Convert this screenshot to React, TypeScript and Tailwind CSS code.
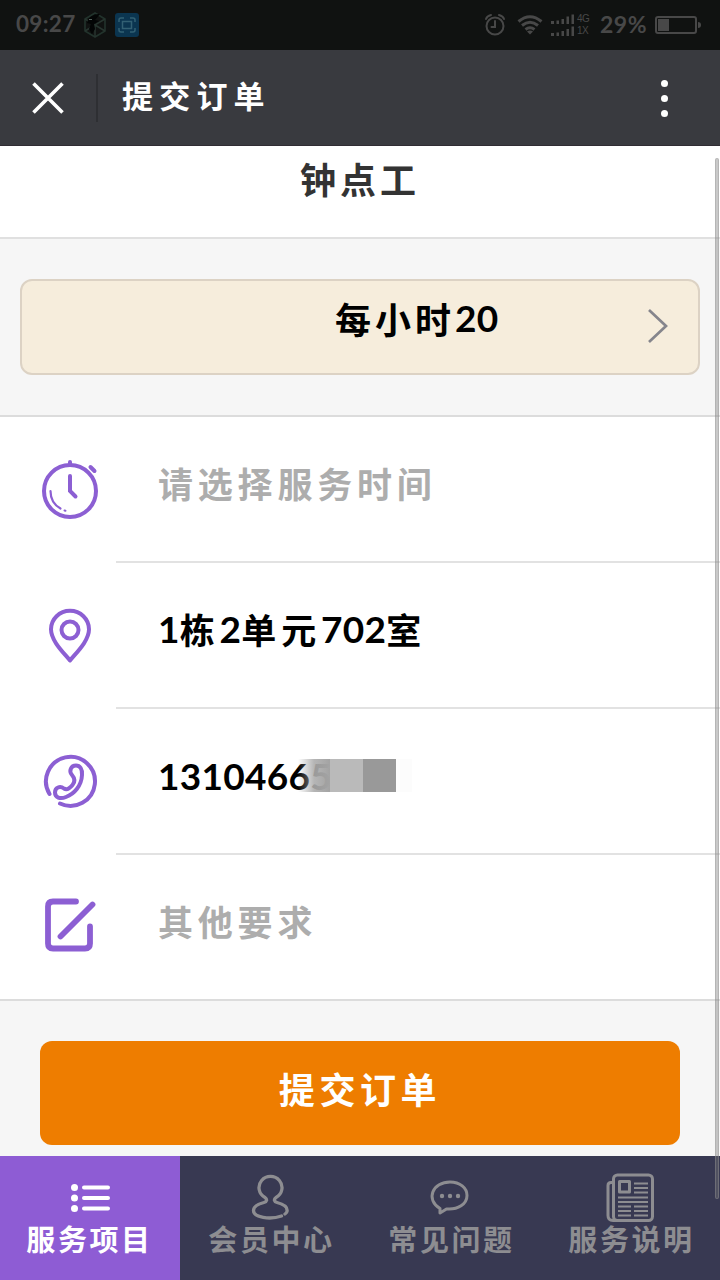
import type { ReactNode } from "react";

const cjk = "font-['Noto_Sans_CJK_SC',sans-serif] font-bold whitespace-nowrap";

function Digits({ children }: { children: ReactNode }) {
  return <span className="font-['Lato','Noto_Sans_CJK_SC',sans-serif] text-[37px] tracking-[0.3px]">{children}</span>;
}

function StatusBar() {
  return (
    <div className="flex h-[50px] items-center bg-[#101211] pl-4 pr-[19px] text-[#484848]">
      <span className="-mt-[3px] w-[60px] whitespace-nowrap font-['Lato',sans-serif] text-[22.5px] font-bold leading-6 tracking-[0.3px]">09:27</span>
      <svg className="ml-[7px]" width="24" height="26" viewBox="0 0 24 26" fill="none">
        <path d="M12 1 22 7v12l-10 6L2 19V7Z" stroke="#22332c" strokeWidth="1.6" />
        <path d="m2 7 10 6 10-6M12 13v12M12 13 2 19M12 13l10 6" stroke="#27352f" strokeWidth="1.5" />
        <path d="M5 8c3-5 8-6 12-6l-5 6 4 1-5 3 1 5-3 5-3-5 2-5-4-1Z" fill="#030505" />
        <path d="M6 7.500h3" stroke="#53605b" />
      </svg>
      <svg className="ml-[8px]" width="24" height="24" viewBox="0 0 24 24" fill="none" stroke="#326073" strokeWidth="1.5">
        <rect width="24" height="24" rx="3" fill="#0b3550" stroke="none" />
        <path d="M4 9V7q0-2 2-2h3M15 5h3q2 0 2 2v2M20 15v2q0 2-2 2h-3M9 19H6q-2 0-2-2v-2" />
        <rect x="7.5" y="8.5" width="9" height="7" />
      </svg>
      <div className="ml-auto flex items-center">
        <svg width="22" height="24" viewBox="0 0 22 24" fill="none" stroke="#484848" strokeWidth="2" strokeLinecap="round">
          <circle cx="11" cy="13" r="8.5" />
          <path d="M2 6q1-3 5-4M20 6q-1-3-5-4M11 8v6H7.5" />
        </svg>
        <svg className="ml-[11px]" width="26" height="22" viewBox="0 0 26 22" fill="none" stroke="#484848" strokeWidth="3">
          <path d="M1.5 7.500q11.500-9.500 23 0M5 11.500q8-6.500 16 0M8.500 15.500q4.500-3.500 9 0" />
          <path d="m13 20.500-3-3q3-2 6 0Z" fill="#484848" stroke="none" />
        </svg>
        <svg className="ml-[8px]" width="24" height="24" viewBox="0 0 24 24" fill="#484848">
          <path d="M0 8h3v3H0ZM5.500 7.500h2.500V11H5.500ZM10.500 6H13v5h-2.500ZM15.500 3.500H18V11h-2.500ZM20.500 1.500H23V11h-2.500ZM0 20h3v3H0ZM5.500 19.500h2.500V23H5.500ZM10.500 18H13v5h-2.500ZM15.500 16H18v7h-2.500ZM20.500 13.500H23V23h-2.500Z" />
        </svg>
        <div className="ml-[2px] w-[14px] font-['Liberation_Sans',sans-serif] text-[10px] leading-[12px] tracking-[-0.5px]">
          <div>4G</div>
          <div>1X</div>
        </div>
        <span className="-mt-[3px] ml-[9px] w-[49px] whitespace-nowrap font-['Lato',sans-serif] text-[23px] font-bold leading-6 tracking-[0.5px]">29%</span>
        <svg className="ml-[6px]" width="46" height="18" viewBox="0 0 46 18" fill="none">
          <rect x="1" y="1" width="40" height="16" rx="2" stroke="#484848" strokeWidth="2" />
          <path d="M3 3h11v12H3Z" fill="#484848" />
          <path d="M43 6q3 0 3 3t-3 3Z" fill="#484848" />
        </svg>
      </div>
    </div>
  );
}

function TitleBar() {
  return (
    <div className="flex h-24 items-center border-b border-[#302c33] bg-[#393a3f] pl-8 pr-[51px]">
      <svg width="32" height="32" viewBox="0 0 32 32" stroke="#fff" strokeWidth="3.6">
        <path d="m1.500 1.500 29 29M30.500 1.500l-29 29" />
      </svg>
      <div className="ml-8 h-12 w-[2px] bg-[#2e2f33]" />
      <h1 className={`${cjk} ml-[24px] -mt-[5px] text-[31px] leading-[48px] tracking-[6.2px] text-white`}>提交订单</h1>
      <div className="ml-auto mt-px flex w-[10px] flex-col items-center gap-[8px]">
        <i className="size-[7px] rounded-full bg-white" />
        <i className="size-[7px] rounded-full bg-white" />
        <i className="size-[7px] rounded-full bg-white" />
      </div>
    </div>
  );
}

const purple = "#8c5fd3";

function ClockIcon() {
  return (
    <svg width="60" height="64" viewBox="0 0 60 64" fill="none" stroke={purple} strokeWidth="4" strokeLinecap="round">
      <circle cx="30" cy="34" r="26" />
      <path d="M30 5v3M50.500 10l4 4M30 19v15l5.500 5.500" />
      <path d="M10.500 34q0 12 10 17.500" strokeWidth="2.2" />
      <path d="m24.500 53.500 1 .2" strokeWidth="2" />
    </svg>
  );
}

function PinIcon() {
  return (
    <svg width="60" height="64" viewBox="0 0 60 64" fill="none" stroke={purple} strokeWidth="4" strokeLinejoin="round">
      <path d="M30 57.500C24 50 11 38 11 26.300a19 18.500 0 0 1 38 0c0 11.700-13 23.700-19 31.200Z" />
      <circle cx="30" cy="27" r="8.5" />
    </svg>
  );
}

function PhoneIcon() {
  return (
    <svg width="60" height="64" viewBox="0 0 60 64" fill="none" stroke={purple} strokeWidth="4" strokeLinecap="round" strokeLinejoin="round">
      <path d="M9.500 45A24.500 24.500 0 1 1 20 54.500" />
      <path d="M32 26c-3.500-4-1-9.500 4-9.500 4 0 6.500 3.500 6 9.500C41.500 37 34 45 26 48c-6 2.500-11 .5-11-4.500 0-5 5-7 9-4 3 2 6-.5 8.500-3.500s3-6-.5-10Z" />
    </svg>
  );
}

function EditIcon() {
  return (
    <svg width="60" height="64" viewBox="0 0 60 64" fill="none" stroke={purple} strokeWidth="5.8" strokeLinecap="round">
      <path d="M36 6.500H13q-5 0-5 5V48.500q0 5 5 5h32q5 0 5-5V31.500" />
      <path d="M20.500 41.500 52.500 9.500" />
    </svg>
  );
}

function FormRow({ icon, children, muted = false, last = false }: { icon: ReactNode; children: ReactNode; muted?: boolean; last?: boolean }) {
  return (
    <div className="flex h-[146px] shrink-0 pl-10">
      <div className="flex w-[76px] items-center pb-[2px]">{icon}</div>
      <div className={`flex flex-1 items-center border-b-2 pb-[12px] pl-[42px] ${last ? "border-transparent" : "border-[#e2e2e2]"}`}>
        <div className={`${cjk} flex items-center text-[35px] leading-[54px] tracking-[4.8px] ${muted ? "text-[#adadad]" : "text-black"}`}>{children}</div>
      </div>
    </div>
  );
}

function ListIcon() {
  return (
    <svg width="50" height="50" viewBox="0 0 50 50" stroke="#fff" strokeWidth="4" strokeLinecap="round" fill="#fff">
      <path d="M19 15.500h24M19 26h24M19 36.500h24" />
      <g stroke="none"><circle cx="9.500" cy="15.500" r="3.5" /><circle cx="9.500" cy="26" r="3.5" /><circle cx="9.500" cy="36.500" r="3.5" /></g>
    </svg>
  );
}

function PersonIcon() {
  return (
    <svg width="50" height="50" viewBox="0 0 50 50" fill="none" stroke="#8d8d91" strokeWidth="3.3" strokeLinecap="round">
      <path d="M36.500 44C25 48 8.500 45.500 8.500 38.500c0-4 5-6.500 10.500-8 3-.8 3.500-3 1-5A11.500 11.200 0 1 1 31 25.500c-2.500 2-2 4.200 1 5 6 1.500 11 4 10 9q-.5 1.500-2 2.500" />
    </svg>
  );
}

function ChatIcon() {
  return (
    <svg width="50" height="50" viewBox="0 0 50 50" fill="none" stroke="#8d8d91" strokeWidth="3" strokeLinejoin="round">
      <path d="M15 36.500C0 27 8 10 25 10c10 0 17 6 17 13.500 0 8.500-9 14.500-20.500 13.500L15 41Z" />
      <g fill="#8d8d91" stroke="none"><circle cx="17" cy="24" r="2.2" /><circle cx="25" cy="24" r="2.2" /><circle cx="33" cy="24" r="2.2" /></g>
    </svg>
  );
}

function NewsIcon() {
  return (
    <svg width="50" height="50" viewBox="0 0 50 50" fill="none" stroke="#8d8d91" strokeWidth="3" strokeLinejoin="round">
      <rect x="8.500" y="3" width="39" height="45.500" rx="4" />
      <path d="M8.500 10.500H6q-3 0-3 3v30q0 5 5 5h8M8.500 10.500v31" />
      <rect x="14.500" y="9.500" width="10" height="10.500" />
      <path d="M29 11.500h14M29 16h14M29 20.500h14M13 25.500h30M13 30h30M13 34.500h13M29 34.500h14M13 39h13M29 39h14M13 43.500h13M29 43.500h14" strokeWidth="2" />
    </svg>
  );
}

function NavItem({ icon, label, active = false }: { icon: ReactNode; label: string; active?: boolean }) {
  return (
    <button className={`flex flex-col items-center pt-4 ${active ? "bg-[#8e5cd4] text-white" : "bg-[#383952] text-[#8d8d91]"}`}>
      {icon}
      <span className={`${cjk} -mt-[6px] text-[29px] leading-[44px] tracking-[2.6px] ${active ? "-ml-[1px]" : "ml-[3px]"}`}>{label}</span>
    </button>
  );
}

export default function App() {
  return (
    <div className="relative flex h-[1280px] w-[720px] flex-col overflow-hidden bg-[#f6f6f6]">
      <StatusBar />
      <TitleBar />
      <main className="flex flex-1 flex-col">
        <div className="flex h-[93px] justify-center border-b-2 border-[#e0e0e0] bg-white pt-[5px]">
          <h2 className={`${cjk} text-[36px] leading-[54px] tracking-[4px] text-[#333]`}>钟点工</h2>
        </div>
        <div className="flex h-[176px] px-5 pt-10">
          <button className="flex h-24 flex-1 items-center rounded-xl border-2 border-[#dcd2c4] bg-[#f6eddc] pl-[313px] pr-[29px]">
            <span className={`${cjk} -mt-[18px] flex items-center text-[36px] leading-[54px] tracking-[4px] text-black`}>每小时<Digits>20</Digits></span>
            <svg className="ml-auto -mt-[2px]" width="22" height="36" viewBox="0 0 22 36" fill="none" stroke="#85858c" strokeWidth="2.7">
              <path d="m2 2 17 16L2 34" />
            </svg>
          </button>
        </div>
        <section className="flex h-[586px] flex-col border-y-2 border-[#dcdcdc] bg-white">
          <FormRow icon={<ClockIcon />} muted>请选择服务时间</FormRow>
          <FormRow icon={<PinIcon />}><Digits>1</Digits>栋<Digits>2</Digits>单元<Digits>702</Digits>室</FormRow>
          <FormRow icon={<PhoneIcon />}>
            <div className="relative w-[262px]">
              <Digits>1310466<span className="text-[#777]">5</span></Digits>
              <div className="absolute left-[140px] top-[11px] flex h-[33px]">
                <div className="w-8 bg-gradient-to-r from-transparent via-[#a3a3a3]/80 to-[#a3a3a3]" />
                <div className="w-[33px] bg-[#bababa]" />
                <div className="w-[33px] bg-[#999]" />
                <div className="w-4 bg-[#fcfcfc]" />
              </div>
            </div>
          </FormRow>
          <FormRow icon={<EditIcon />} muted last>其他要求</FormRow>
        </section>
        <div className="flex flex-1 px-10 pt-10">
          <button className="flex h-[104px] flex-1 items-center justify-center rounded-xl bg-[#ee7d00] pb-[11px]">
            <span className={`${cjk} text-[36px] leading-[54px] tracking-[4.6px] text-white`}>提交订单</span>
          </button>
        </div>
      </main>
      <nav className="grid h-[124px] grid-cols-4">
        <NavItem icon={<ListIcon />} label="服务项目" active />
        <NavItem icon={<PersonIcon />} label="会员中心" />
        <NavItem icon={<ChatIcon />} label="常见问题" />
        <NavItem icon={<NewsIcon />} label="服务说明" />
      </nav>
      <div className="absolute right-[1px] top-[158px] h-[1041px] w-[4px] rounded-full border border-[#999]/40 bg-[#777]/40" />
    </div>
  );
}
